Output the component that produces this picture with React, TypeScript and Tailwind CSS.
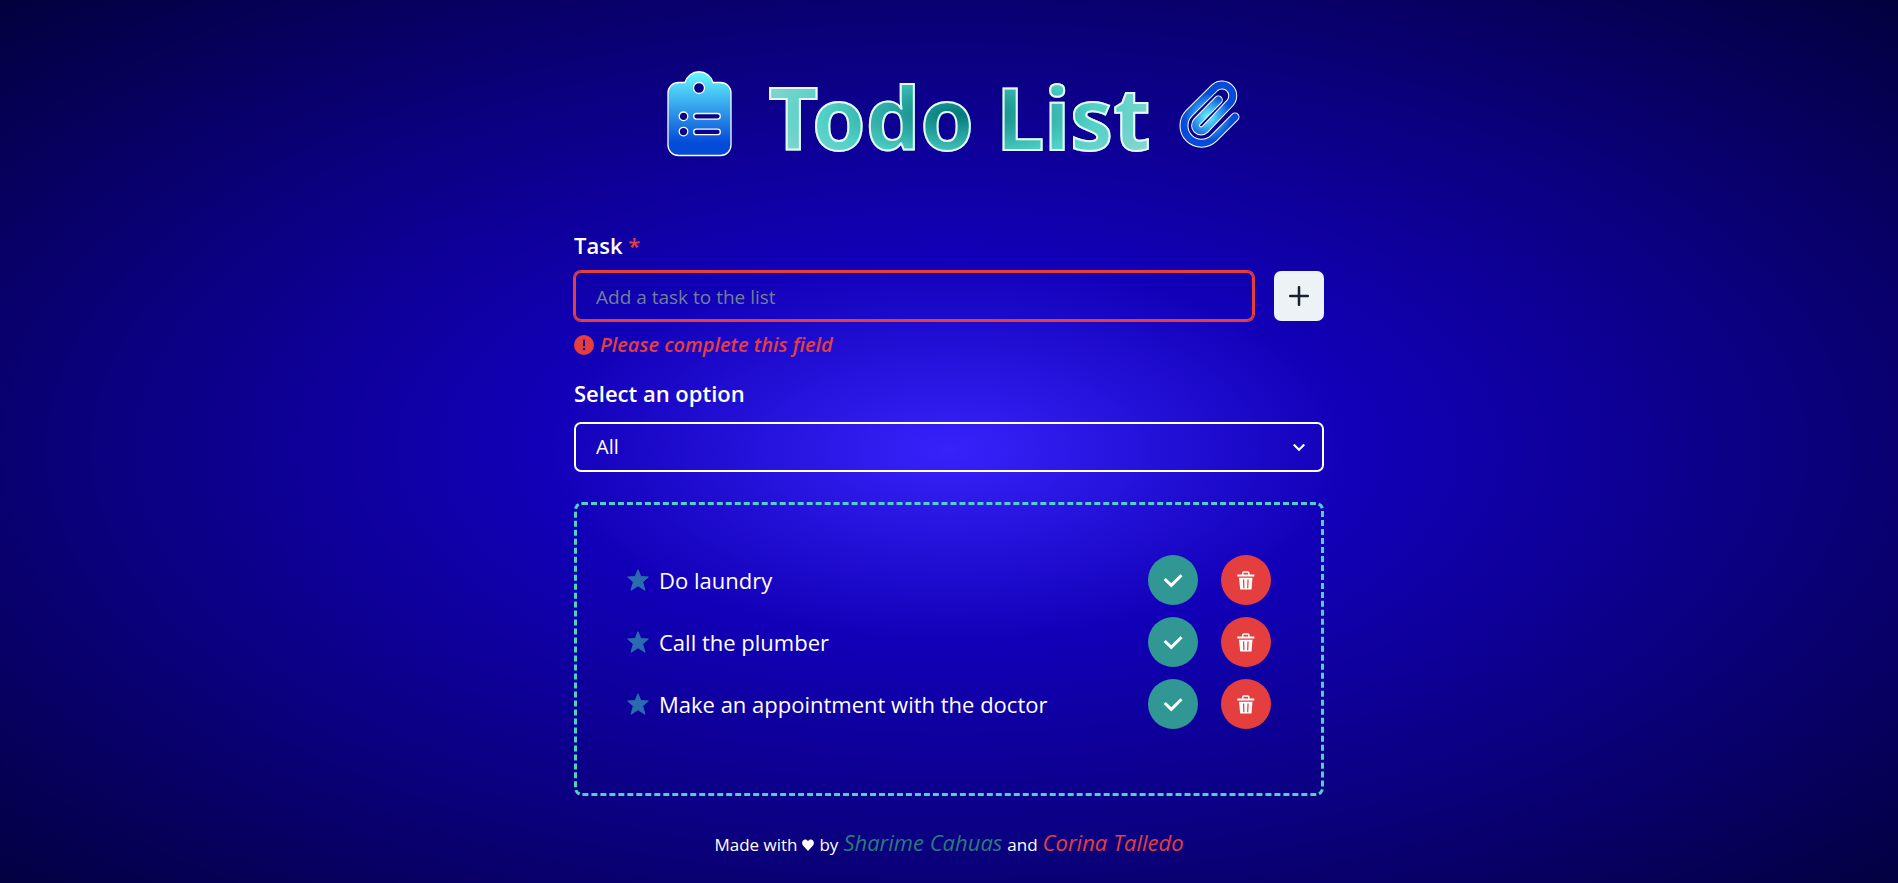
import { useState } from "react";

const tasks = ["Do laundry", "Call the plumber", "Make an appointment with the doctor"];

function ClipboardIcon() {
  return (
    <svg className="h-[90px] w-[66px]" viewBox="12 0 66 90" aria-hidden="true">
      <defs>
        <linearGradient id="clipboard-fill" x1="0" y1="0" x2="0" y2="1">
          <stop offset="0" stopColor="#66f9ff" />
          <stop offset="0.85" stopColor="#044bd9" />
          <stop offset="1" stopColor="#044bd9" />
        </linearGradient>
      </defs>
      <path
        fill="url(#clipboard-fill)"
        fillRule="evenodd"
        stroke="#fff"
        strokeWidth="1.3"
        d="M31 13.500a14.500 14.500 0 0 1 28 0H66.500a10.500 10.500 0 0 1 10.500 10.500V76a10.500 10.500 0 0 1-10.500 10.500H24.500A10.500 10.500 0 0 1 14 76V24A10.500 10.500 0 0 1 24.500 13.500ZM45 13.500a5.500 5.500 0 1 0 0 11a5.500 5.500 0 0 0 0-11ZM29.500 43a4.300 4.300 0 1 0 0 8.600a4.300 4.300 0 0 0 0-8.600ZM29.500 58.300a4.300 4.300 0 1 0 0 8.600a4.300 4.300 0 0 0 0-8.600ZM42.500 44.500a2.800 2.800 0 0 0 0 5.600H63.500a2.800 2.800 0 0 0 0-5.600ZM42.500 60.100a2.800 2.800 0 0 0 0 5.600H63.500a2.800 2.800 0 0 0 0-5.600Z"
      />
    </svg>
  );
}

const clipPath =
  "M105 47L83.900 68.100A17.500 17.500 0 0 1 59.100 43.300L85.100 17.400A10.800 10.800 0 0 1 100.300 32.600L75 59.300A5.500 5.500 0 0 1 67.200 51.500L88.300 30";

function PaperclipIcon() {
  return (
    <svg className="h-[72px] w-[62px]" viewBox="48 8 62 72" fill="none" strokeLinecap="round" aria-hidden="true">
      <defs>
        <radialGradient id="paperclip-fill" gradientUnits="userSpaceOnUse" cx="78" cy="47" r="28">
          <stop offset="0" stopColor="#66f9ff" />
          <stop offset="0.85" stopColor="#044bd9" />
        </radialGradient>
      </defs>
      <path d={clipPath} stroke="#fff" strokeWidth="9" />
      <path d={clipPath} stroke="url(#paperclip-fill)" strokeWidth="7" />
    </svg>
  );
}

function AlertIcon() {
  return (
    <svg className="h-5 w-5" viewBox="0 0 24 24" fill="currentColor" aria-hidden="true">
      <path fillRule="evenodd" d="M12 0a12 12 0 1 0 0 24a12 12 0 0 0 0-24ZM12 5.500a1.200 1.200 0 0 1 1.200 1.200v6a1.200 1.200 0 0 1-2.400 0V6.700A1.200 1.200 0 0 1 12 5.500ZM12 15.300a1.500 1.500 0 1 0 0 3a1.500 1.500 0 0 0 0-3Z" />
    </svg>
  );
}

function StarIcon() {
  return (
    <svg className="h-[22px] w-[22px] shrink-0 text-[#2b6cb0]" viewBox="0 0 22 22" fill="currentColor" stroke="currentColor" strokeLinejoin="round" aria-hidden="true">
      <path d="M11 .7L13.800 7.600L21.300 8L15.600 13L18 21.300L11 16.800L4 21.300L6.400 13L.7 8L8.200 7.600Z" />
    </svg>
  );
}

function TrashIcon() {
  return (
    <svg className="h-5 w-5" viewBox="0 0 20 20" fill="currentColor" aria-hidden="true">
      <path fillRule="evenodd" d="M3 7.700H16.500L15.500 19.500H4.200ZM6.900 9.500L7.300 18.300H8.500L8.200 9.500ZM11.400 9.500L11.100 18.300H12.300L12.700 9.500Z" />
      <path fillRule="evenodd" d="M1.300 4.500H6V3A1.800 1.800 0 0 1 7.800 1.200H11.800A1.800 1.800 0 0 1 13.600 3V4.500H18.300V6.500H1.300ZM7.500 4.500H12.100V2.700H7.500Z" />
    </svg>
  );
}

export default function App() {
  const [task, setTask] = useState("");
  return (
    <div className="flex min-h-screen flex-col items-center bg-[radial-gradient(ellipse_at_50%_51%,#3723fb_0%,#1200b8_30%,#03003d_100%)] px-4 font-['Open_Sans',sans-serif] text-white">
      <header className="flex items-center justify-center pt-[51px] pl-2">
        <ClipboardIcon />
        <h1 className="mr-[27px] ml-9 bg-[radial-gradient(ellipse_at_center,#007a7a_0%,#4fd1c5_50%,#b2d8d8_100%)] bg-clip-text pt-[6px] font-['Noto_Sans',sans-serif] text-[86px]/[120px] font-bold text-transparent [-webkit-text-stroke:2px_#e6f7f7]">
          Todo List
        </h1>
        <PaperclipIcon />
      </header>

      <main className="mt-[54px] w-full max-w-[750px]">
        <form onSubmit={(e) => e.preventDefault()}>
          <label htmlFor="task" className="block text-[22px]/[28px] font-semibold">
            Task <span className="text-[#e53e3e]" aria-hidden="true">*</span>
          </label>
          <div className="mt-3 flex gap-5">
            <input
              id="task"
              value={task}
              onChange={(e) => setTask(e.target.value)}
              placeholder="Add a task to the list"
              aria-invalid="true"
              aria-describedby="task-error"
              className="h-[50px] min-w-0 flex-1 rounded-[7px] border-2 border-[#e53e3e] bg-transparent px-5 pt-[2px] text-[19px] shadow-[0_0_0_1px_#e53e3e] outline-none placeholder:text-[#718096]"
            />
            <button type="submit" aria-label="Add task" className="flex h-[50px] w-[50px] items-center justify-center rounded-[7px] bg-[#edf2f7]">
              <svg className="h-5 w-5" viewBox="0 0 20 20" fill="none" stroke="#1a202c" strokeWidth="2.5" strokeLinecap="round" aria-hidden="true">
                <path d="M10 1.200V18.800M1.200 10H18.800" />
              </svg>
            </button>
          </div>
          <p id="task-error" className="mt-[10px] flex h-[28px] items-center gap-[6px] text-[20px] font-semibold text-[#e53e3e] italic">
            <AlertIcon />
            Please complete this field
          </p>

          <label htmlFor="filter" className="mt-5 block text-[22px]/[28px] font-semibold">Select an option</label>
          <div className="mt-[15px] grid items-center">
            <select id="filter" className="col-start-1 row-start-1 h-[50px] w-full appearance-none rounded-[7px] border-2 border-white bg-transparent px-5 text-[20px] outline-none">
              <option className="text-black">All</option>
              <option className="text-black">Completed</option>
              <option className="text-black">Pending</option>
            </select>
            <svg className="pointer-events-none col-start-1 row-start-1 mr-[19px] h-3 w-3 justify-self-end" viewBox="0 0 12 12" fill="none" stroke="#fff" strokeWidth="2.2" aria-hidden="true">
              <path d="M.7 3.500L6 8.700L11.300 3.500" />
            </svg>
          </div>
        </form>

        <ul className="mt-[30px] flex min-h-[294px] flex-col gap-3 rounded-[8px] border-3 border-dashed border-[#4fd1c5] px-[50px] pt-[50px]">
          {tasks.map((name) => (
            <li key={name} className="flex items-center">
              <StarIcon />
              <span className="ml-[10px] flex-1 text-[22px]/[30px]">{name}</span>
              <button type="button" aria-label={`Complete: ${name}`} className="flex h-[50px] w-[50px] items-center justify-center rounded-full bg-[#319795]">
                <svg className="h-5 w-5" viewBox="0 0 20 20" fill="none" stroke="#fff" strokeWidth="3" aria-hidden="true">
                  <path d="M1.700 9L8.300 15.300L18.500 5.200" />
                </svg>
              </button>
              <button type="button" aria-label={`Delete: ${name}`} className="ml-[23px] flex h-[50px] w-[50px] items-center justify-center rounded-full bg-[#e53e3e]">
                <TrashIcon />
              </button>
            </li>
          ))}
        </ul>
      </main>

      <footer className="mt-[28px] flex items-baseline justify-center gap-[5px] text-[17px]/[36px]">
        <span>Made with</span>
        <svg className="h-[12px] w-[12px]" viewBox="0 0 12 12" fill="#fff" role="img" aria-label="love">
          <path d="M6 12L1 6.500C-.5 4.500 0 1.500 2.200.7C3.700.2 5.200.9 6 2.200C6.800.9 8.300.2 9.800.7C12 1.500 12.500 4.500 11 6.500Z" />
        </svg>
        <span>by</span>
        <a href="#sharime" className="text-[22px] text-[#2c7a7b] italic">Sharime Cahuas</a>
        <span>and</span>
        <a href="#corina" className="text-[22px] text-[#e53e3e] italic">Corina Talledo</a>
      </footer>
    </div>
  );
}
